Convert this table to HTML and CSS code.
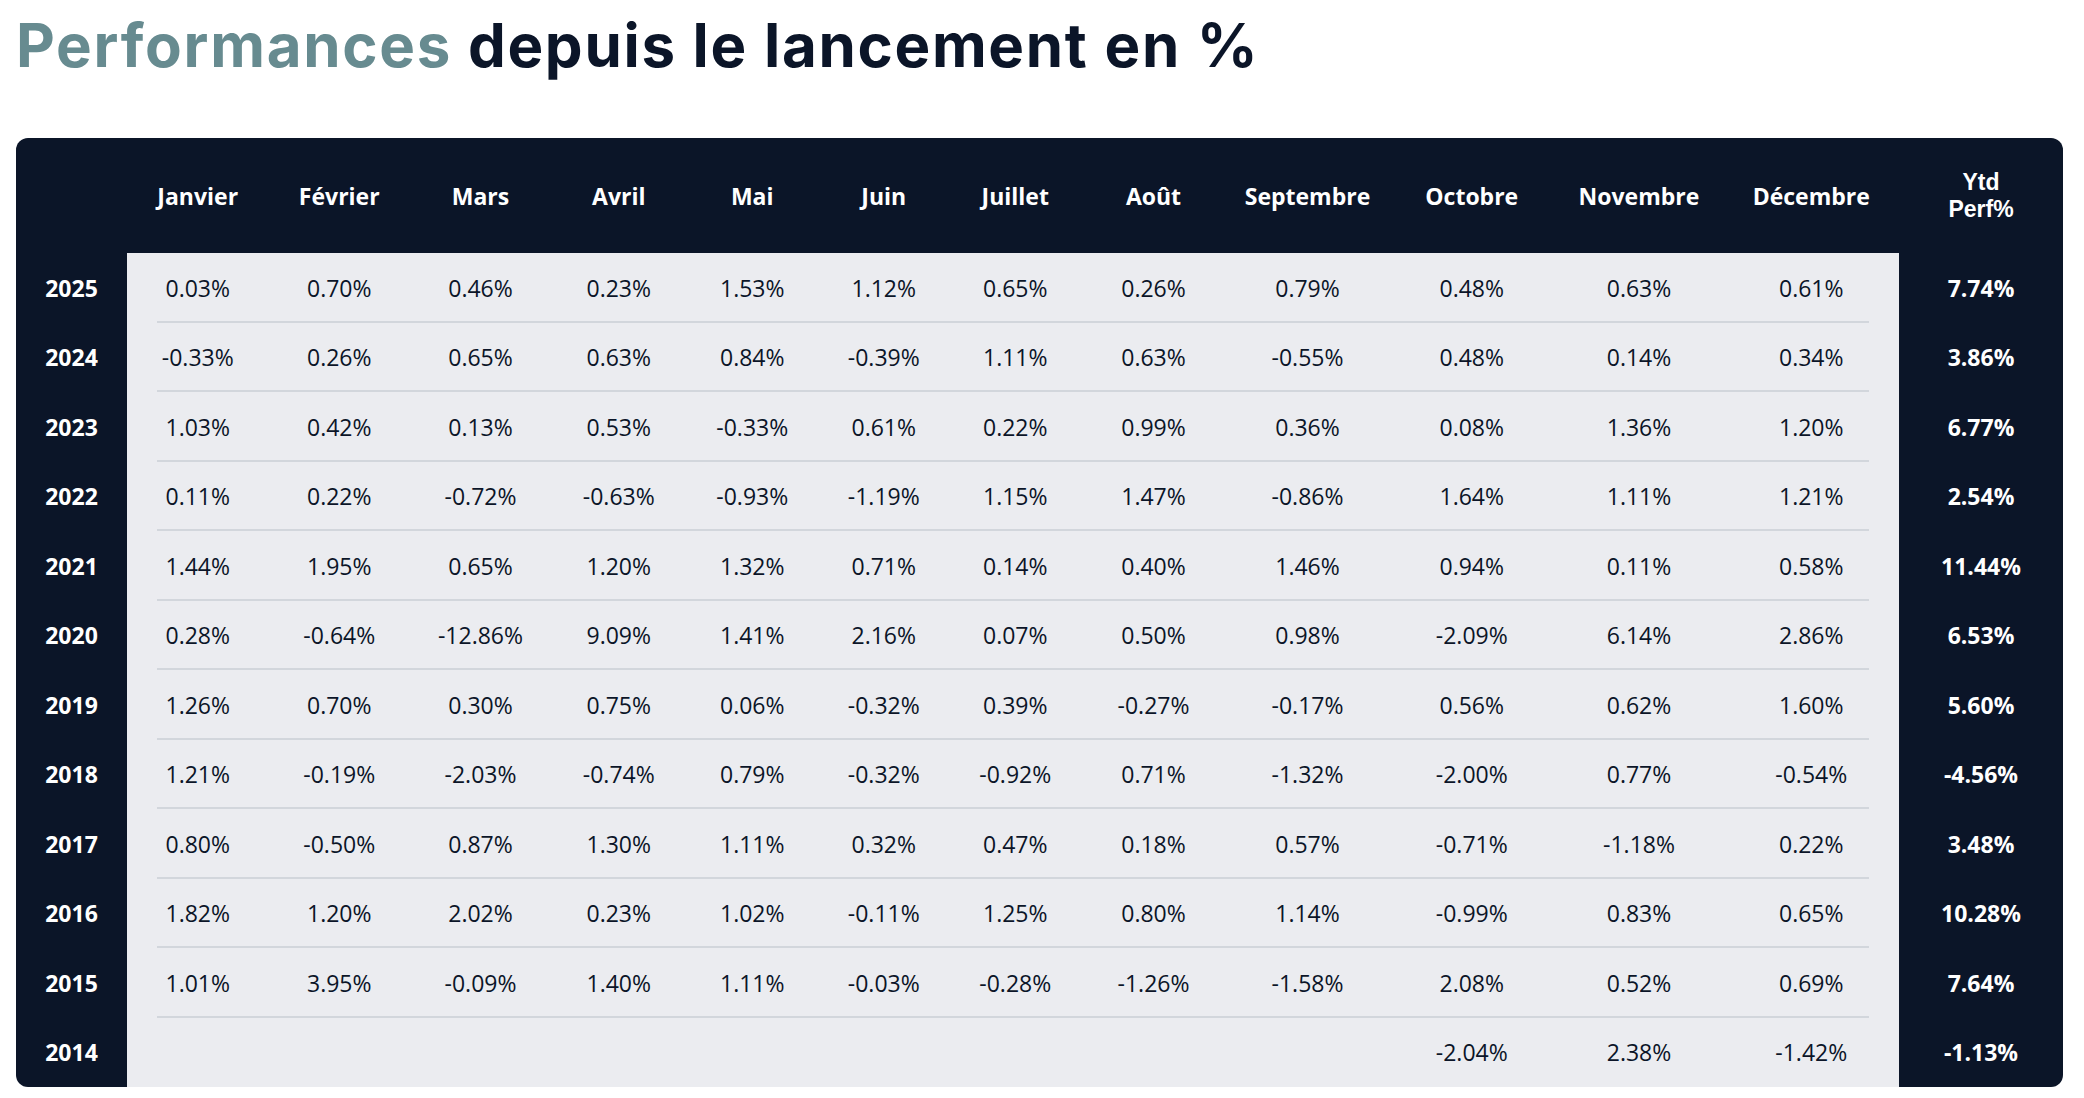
FILE: index.html
```html
<!DOCTYPE html>
<html lang="fr">
<head>
<meta charset="utf-8">
<title>Performances depuis le lancement en %</title>
<link rel="stylesheet" href="styles.css">
</head>
<body>
<div class="page">
  <h1 class="title"><span class="accent">Performances</span> depuis le lancement en %</h1>
  <div class="panel">
    <div class="side years">
      <div class="head"></div>
      <div class="cell">2025</div>
      <div class="cell">2024</div>
      <div class="cell">2023</div>
      <div class="cell">2022</div>
      <div class="cell">2021</div>
      <div class="cell">2020</div>
      <div class="cell">2019</div>
      <div class="cell">2018</div>
      <div class="cell">2017</div>
      <div class="cell">2016</div>
      <div class="cell">2015</div>
      <div class="cell">2014</div>
    </div>
    <div class="months">
      <div class="mhead">
        <div>Janvier</div><div>Février</div><div>Mars</div><div>Avril</div><div>Mai</div><div>Juin</div><div>Juillet</div><div>Août</div><div>Septembre</div><div>Octobre</div><div>Novembre</div><div>Décembre</div>
      </div>
      <div class="mbody">
        <div class="mrow"><div>0.03%</div><div>0.70%</div><div>0.46%</div><div>0.23%</div><div>1.53%</div><div>1.12%</div><div>0.65%</div><div>0.26%</div><div>0.79%</div><div>0.48%</div><div>0.63%</div><div>0.61%</div></div>
        <div class="mrow"><div>-0.33%</div><div>0.26%</div><div>0.65%</div><div>0.63%</div><div>0.84%</div><div>-0.39%</div><div>1.11%</div><div>0.63%</div><div>-0.55%</div><div>0.48%</div><div>0.14%</div><div>0.34%</div></div>
        <div class="mrow"><div>1.03%</div><div>0.42%</div><div>0.13%</div><div>0.53%</div><div>-0.33%</div><div>0.61%</div><div>0.22%</div><div>0.99%</div><div>0.36%</div><div>0.08%</div><div>1.36%</div><div>1.20%</div></div>
        <div class="mrow"><div>0.11%</div><div>0.22%</div><div>-0.72%</div><div>-0.63%</div><div>-0.93%</div><div>-1.19%</div><div>1.15%</div><div>1.47%</div><div>-0.86%</div><div>1.64%</div><div>1.11%</div><div>1.21%</div></div>
        <div class="mrow"><div>1.44%</div><div>1.95%</div><div>0.65%</div><div>1.20%</div><div>1.32%</div><div>0.71%</div><div>0.14%</div><div>0.40%</div><div>1.46%</div><div>0.94%</div><div>0.11%</div><div>0.58%</div></div>
        <div class="mrow"><div>0.28%</div><div>-0.64%</div><div>-12.86%</div><div>9.09%</div><div>1.41%</div><div>2.16%</div><div>0.07%</div><div>0.50%</div><div>0.98%</div><div>-2.09%</div><div>6.14%</div><div>2.86%</div></div>
        <div class="mrow"><div>1.26%</div><div>0.70%</div><div>0.30%</div><div>0.75%</div><div>0.06%</div><div>-0.32%</div><div>0.39%</div><div>-0.27%</div><div>-0.17%</div><div>0.56%</div><div>0.62%</div><div>1.60%</div></div>
        <div class="mrow"><div>1.21%</div><div>-0.19%</div><div>-2.03%</div><div>-0.74%</div><div>0.79%</div><div>-0.32%</div><div>-0.92%</div><div>0.71%</div><div>-1.32%</div><div>-2.00%</div><div>0.77%</div><div>-0.54%</div></div>
        <div class="mrow"><div>0.80%</div><div>-0.50%</div><div>0.87%</div><div>1.30%</div><div>1.11%</div><div>0.32%</div><div>0.47%</div><div>0.18%</div><div>0.57%</div><div>-0.71%</div><div>-1.18%</div><div>0.22%</div></div>
        <div class="mrow"><div>1.82%</div><div>1.20%</div><div>2.02%</div><div>0.23%</div><div>1.02%</div><div>-0.11%</div><div>1.25%</div><div>0.80%</div><div>1.14%</div><div>-0.99%</div><div>0.83%</div><div>0.65%</div></div>
        <div class="mrow"><div>1.01%</div><div>3.95%</div><div>-0.09%</div><div>1.40%</div><div>1.11%</div><div>-0.03%</div><div>-0.28%</div><div>-1.26%</div><div>-1.58%</div><div>2.08%</div><div>0.52%</div><div>0.69%</div></div>
        <div class="mrow"><div></div><div></div><div></div><div></div><div></div><div></div><div></div><div></div><div></div><div>-2.04%</div><div>2.38%</div><div>-1.42%</div></div>
      </div>
    </div>
    <div class="side ytd">
      <div class="head"><span class="hl">Ytd</span><span class="hl">Perf%</span></div>
      <div class="cell">7.74%</div>
      <div class="cell">3.86%</div>
      <div class="cell">6.77%</div>
      <div class="cell">2.54%</div>
      <div class="cell">11.44%</div>
      <div class="cell">6.53%</div>
      <div class="cell">5.60%</div>
      <div class="cell">-4.56%</div>
      <div class="cell">3.48%</div>
      <div class="cell">10.28%</div>
      <div class="cell">7.64%</div>
      <div class="cell">-1.13%</div>
    </div>
  </div>
</div>
</body>
</html>
```

FILE: styles.css
```css
* { box-sizing: border-box; }

body {
  margin: 0;
  background: #ffffff;
  font-family: "Open Sans", "Noto Sans", sans-serif;
  color: #0b1528;
}

.page {
  width: 2047px;
  margin-left: 16px;
  padding-top: 9px;
}

.title {
  margin: 0 0 57px 0;
  font-family: "Inter", "Noto Sans", sans-serif;
  font-weight: 700;
  font-size: 60px;
  line-height: 72px;
  letter-spacing: 1.7px;
  color: #0b1528;
}

.title .accent {
  color: #678b90;
}

.panel {
  display: flex;
  background: #0b1528;
  border-radius: 12px;
  overflow: hidden;
}

.side {
  display: flex;
  flex-direction: column;
  color: #ffffff;
  font-weight: 700;
  font-size: 23px;
}

.years { width: 111px; }
.ytd { width: 164px; }

.side .head {
  height: 115px;
  display: flex;
  flex-direction: column;
  align-items: center;
  justify-content: center;
  text-align: center;
}

.side .head .hl {
  display: block;
  font-family: "Liberation Sans", "Open Sans", sans-serif;
  font-size: 23px;
  line-height: 27px;
}

.side .cell {
  height: 69.5px;
  display: flex;
  align-items: center;
  justify-content: center;
}

.months {
  width: 1772px;
  display: flex;
  flex-direction: column;
}

.mhead,
.mrow {
  display: grid;
  grid-template-columns: 141.5px 141.5px 141px 135.5px 131.5px 131.5px 131.5px 145px 163px 165.5px 169px 175.5px;
}

.mhead {
  height: 115px;
  color: #ffffff;
  font-weight: 700;
  font-size: 23px;
}

.mhead > div,
.mrow > div {
  display: flex;
  align-items: center;
  justify-content: center;
}

.mbody {
  background: #ebecf0;
}

.mrow {
  height: 69.5px;
  font-size: 23px;
  color: #0b1528;
  background: linear-gradient(#d2d6dc, #d2d6dc) no-repeat center bottom / calc(100% - 60px) 2px;
}

.mrow:last-child {
  background: none;
}
```
